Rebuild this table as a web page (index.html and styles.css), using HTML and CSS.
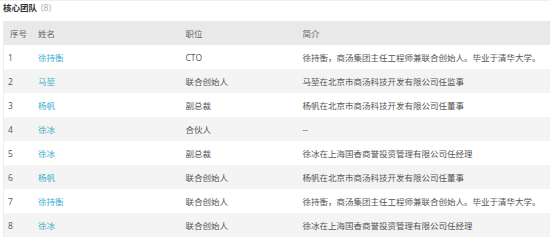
FILE: index.html
```html
<!DOCTYPE html>
<html lang="zh">
<head>
<meta charset="utf-8">
<link rel="stylesheet" href="styles.css">
</head>
<body>
<div class="panel">
  <div class="title"><span class="title-text">核心团队</span><span class="count">(8)</span></div>
  <table class="team">
    <thead>
      <tr><th class="c-no">序号</th><th class="c-name">姓名</th><th class="c-pos">职位</th><th class="c-intro">简介</th></tr>
    </thead>
    <tbody>
      <tr><td class="c-no">1</td><td class="c-name"><a>徐持衡</a></td><td>CTO</td><td>徐持衡，商汤集团主任工程师兼联合创始人。毕业于清华大学。</td></tr>
      <tr><td class="c-no">2</td><td class="c-name"><a>马堃</a></td><td>联合创始人</td><td>马堃在北京市商汤科技开发有限公司任监事</td></tr>
      <tr><td class="c-no">3</td><td class="c-name"><a>杨帆</a></td><td>副总裁</td><td>杨帆在北京市商汤科技开发有限公司任董事</td></tr>
      <tr><td class="c-no">4</td><td class="c-name"><a>徐冰</a></td><td>合伙人</td><td>--</td></tr>
      <tr><td class="c-no">5</td><td class="c-name"><a>徐冰</a></td><td>副总裁</td><td>徐冰在上海国香商誉投资管理有限公司任经理</td></tr>
      <tr><td class="c-no">6</td><td class="c-name"><a>杨帆</a></td><td>联合创始人</td><td>杨帆在北京市商汤科技开发有限公司任董事</td></tr>
      <tr><td class="c-no">7</td><td class="c-name"><a>徐持衡</a></td><td>联合创始人</td><td>徐持衡，商汤集团主任工程师兼联合创始人。毕业于清华大学。</td></tr>
      <tr><td class="c-no">8</td><td class="c-name"><a>徐冰</a></td><td>联合创始人</td><td>徐冰在上海国香商誉投资管理有限公司任经理</td></tr>
    </tbody>
  </table>
</div>
</body>
</html>
```
FILE: styles.css
```css
html, body {
  margin: 0;
  padding: 0;
  background: #fff;
}
body {
  font-family: "Open Sans", "Noto Sans CJK SC", sans-serif;
  font-size: 8.5px;
  color: #555;
}
.panel {
  border-top: 1px solid #f0f0f0;
  padding-left: 3px;
}
.title {
  height: 20px;
  line-height: 14px;
  display: flex;
  align-items: flex-start;
  gap: 4px;
}
.title-text {
  font-weight: bold;
  color: #333;
  font-size: 8.5px;
}
.count {
  color: #aaa;
}
.team {
  width: 100%;
  border-collapse: collapse;
  border-left: 1px solid #eee;
  table-layout: fixed;
}
.team th, .team td {
  height: 24px;
  padding: 0;
  text-align: left;
  font-weight: normal;
  white-space: nowrap;
  vertical-align: middle;
}
.team thead tr {
  background: #e9e9e9;
}
.team th {
  color: #666;
}
.team tbody tr:nth-child(even) {
  background: #f4f4f4;
}
.c-no { width: 28px; padding-left: 4px !important; }
th.c-no { padding-left: 6px !important; }
.c-name { width: 147px; }
.c-pos { width: 117px; }
.team a {
  color: #3ab0cc;
  text-decoration: none;
}
```
